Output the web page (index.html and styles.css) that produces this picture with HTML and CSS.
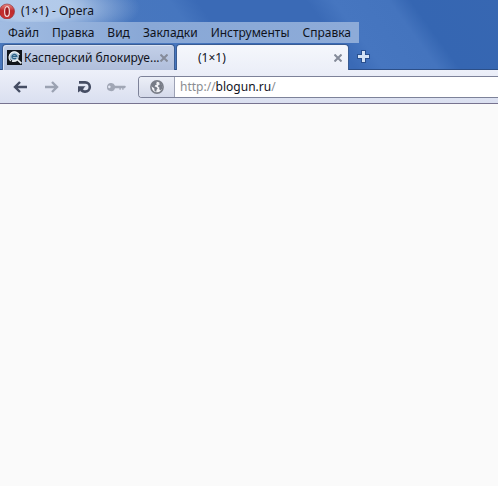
FILE: index.html
```html
<!DOCTYPE html>
<html lang="ru">
<head>
<meta charset="utf-8">
<title>(1×1) - Opera</title>
<link rel="stylesheet" href="styles.css">
</head>
<body>
<header class="chrome">
  <div class="titlebar">
    <svg class="opera" viewBox="0 0 16 16" aria-hidden="true">
      <defs>
        <linearGradient id="red" x1="0" y1="0" x2="0" y2="1">
          <stop offset="0" stop-color="#e98a86"/><stop offset=".45" stop-color="#c02a2c"/><stop offset="1" stop-color="#c83432"/>
        </linearGradient>
      </defs>
      <circle cx="7" cy="8.5" r="7.5" fill="url(#red)" stroke="#8f2930" stroke-width=".6"/>
      <ellipse cx="7" cy="8.5" rx="2.4" ry="4.9" fill="#a11b20" stroke="#f4dcdc" stroke-width="1.2"/>
    </svg>
    <span class="title">(1×1) - Opera</span>
  </div>
  <nav class="menu">
    <button>Файл</button>
    <button>Правка</button>
    <button>Вид</button>
    <button>Закладки</button>
    <button>Инструменты</button>
    <button>Справка</button>
  </nav>
  <div class="tabs">
    <div class="tab">
      <svg class="favicon" viewBox="0 0 15 15" aria-hidden="true">
        <rect width="15" height="15" fill="#10141a"/>
        <circle cx="7.2" cy="6.4" r="4.8" fill="#a9c3d6"/>
        <path d="M3.6 11A5.4 5.4 0 1 1 12.4 5" fill="none" stroke="#f2f6f8" stroke-width="1.3"/>
        <path d="M5 6.4h4.8A2.4 2.4 0 1 0 5.4 8q1.8 1.2 3.8.2" fill="none" stroke="#2c6287" stroke-width="1.2"/>
        <path d="M5 11q3 .8 5.4-1.4l4 3.8" fill="none" stroke="#e8edf0" stroke-width="1.7"/>
      </svg>
      <button class="label">Касперский блокируе...</button>
      <button class="close" aria-label="Закрыть"><svg viewBox="0 0 8 8"><path d="M.5.5l7 7M7.5.5l-7 7"/></svg></button>
    </div>
    <div class="tab active">
      <span class="favicon"></span>
      <button class="label">(1×1)</button>
      <button class="close" aria-label="Закрыть"><svg viewBox="0 0 8 8"><path d="M.5.5l7 7M7.5.5l-7 7"/></svg></button>
    </div>
    <button class="new" aria-label="Новая вкладка">
      <svg viewBox="0 0 13 13"><path d="M4 0h5v4h4v5H9v4H4V9H0V4h4z" fill="#29508f"/><path d="M5 1h3v4h4v3H8v4H5V8H1V5h4z" fill="#d5e3f5"/></svg>
    </button>
  </div>
</header>
<div class="toolbar">
  <button class="tool" aria-label="Назад"><svg viewBox="0 0 20 16"><path d="M10 3L5 8l5 5M5 8h12" fill="none" stroke="#454d63" stroke-width="2.4"/></svg></button>
  <button class="tool" aria-label="Вперёд"><svg viewBox="0 0 20 16"><path d="M10 3l5 5-5 5M15 8H3" fill="none" stroke="#9ba2b2" stroke-width="2.4"/></svg></button>
  <button class="tool" aria-label="Обновить"><svg viewBox="0 0 20 16"><path d="M5 3.4h6.2a4.5 4.5 0 0 1 0 9.2Q9 12.8 7 11" fill="none" stroke="#454d63" stroke-width="2.6"/><path d="M4 7.2h7.6L9.8 9l-.6 1.8-2 .4L4 13.6z" fill="#454d63"/></svg></button>
  <button class="tool" aria-label="Пароли"><svg viewBox="0 0 20 16"><path fill="#a0a6b5" fill-rule="evenodd" d="M5 4a4 4 0 0 1 4 2.7H19l1 1.1-1.2 1.5h-1.2v1.5h-1.4V9.3h-1.4v1.5h-1.4V9.3H9A4.1 4.1 0 1 1 5 4zM3.3 6.6a1.3 1.3 0 1 0 .1 0z"/></svg></button>
  <div class="address">
    <button class="site" aria-label="Сведения о сайте"><svg viewBox="0 0 14 14"><circle cx="7" cy="7" r="6.1" fill="#f1f2f5" stroke="#7a7e88" stroke-width="1.6"/><path fill="#777c87" d="M1.8 3.8L4.2 1.7l2.7.2-.7 1.5.8 1-1.6.7-.8 1.3 1.8.6 1.3 1.4-1.1 1.4-.4 2.1-1.7-1.2-.3-2.4L2 6.7zM8.8 2.3l2.1.7 1.5 2.5-.2 3-1.7 2-1.3-1.2.2-1.8-1.3-.8.3-1.7 1.5-.6z"/></svg></button>
    <a class="url" href="#">http://<b>blogun.ru</b>/</a>
  </div>
</div>
<main class="page"></main>
</body>
</html>
```
FILE: styles.css
```css
* { box-sizing: border-box; }
body {
  margin: 0;
  min-height: 100vh;
  background: #fafafa;
  color: #10131c;
  font: 12px/16px "Noto Sans", "Open Sans", sans-serif;
}
button {
  border: 0;
  padding: 0;
  background: none;
  color: inherit;
  font: inherit;
  white-space: nowrap;
}
svg { display: block; }
.chrome {
  background:
    radial-gradient(ellipse 110px 34px at 30px 8px, rgba(190, 211, 238, .9) 35%, rgba(190, 211, 238, 0)),
    linear-gradient(54deg, #4a78bd 0, #4676bf 40%, #3a6ab6 45%, #3a6ab6 65%, #4676c0 70%, #4474be 80%, #3566b2 84%, #3767b2 100%);
}
.titlebar {
  display: flex;
  align-items: center;
  gap: 5px;
  height: 22px;
}
.opera { width: 16px; height: 16px; }
.menu {
  display: flex;
  gap: 13px;
  width: max-content;
  height: 21px;
  padding: 0 8px;
  background: linear-gradient(90deg, #a1bce2, #89a8d6 40%, #8dabd8);
}
.tabs {
  display: flex;
  gap: 1px;
  height: 27px;
  padding: 1px 0 0 2px;
  border-bottom: 1px solid #2c4f88;
}
.tab {
  display: flex;
  align-items: center;
  gap: 2px;
  width: 173px;
  height: 26px;
  padding: 0 6px 0 4px;
  border: 1px solid #3a5c92;
  border-bottom: 0;
  border-radius: 4px 4px 0 0;
  background: linear-gradient(#c3d0e8, #b0bedb);
  box-shadow: inset 1px 1px #dbe4f3;
}
.active {
  background: linear-gradient(#f5f7fc, #eceff8);
  box-shadow: none;
}
.favicon { flex: none; width: 15px; height: 15px; }
.label { flex: 1; min-width: 0; text-align: left; }
.close svg {
  width: 8px;
  height: 8px;
  fill: none;
  stroke: #858b99;
  stroke-width: 2;
}
.new { padding: 0 7px; }
.new svg { width: 13px; height: 13px; }
.toolbar {
  display: flex;
  align-items: center;
  height: 34px;
  padding-left: 4px;
  border-bottom: 1px solid #77738f;
  background: linear-gradient(#edf0f9, #dadff0);
}
.tool {
  display: grid;
  place-items: center;
  width: 32px;
  height: 24px;
}
.tool svg { width: 20px; height: 16px; }
.address {
  display: flex;
  flex: 1;
  height: 22px;
  margin-left: 6px;
  border: 1px solid #7d8299;
  border-right: 0;
  border-radius: 4px 0 0 4px;
  background: #fff;
}
.site {
  display: grid;
  place-items: center;
  width: 36px;
  border-right: 1px solid #9da2b5;
  border-radius: 3px 0 0 3px;
  background: linear-gradient(#eceff7, #d5daea);
}
.site svg { width: 14px; height: 14px; }
.url {
  padding: 2px 5px;
  color: #8b8d91;
  text-decoration: none;
}
.url b { color: #10131c; font-weight: 400; }
```
